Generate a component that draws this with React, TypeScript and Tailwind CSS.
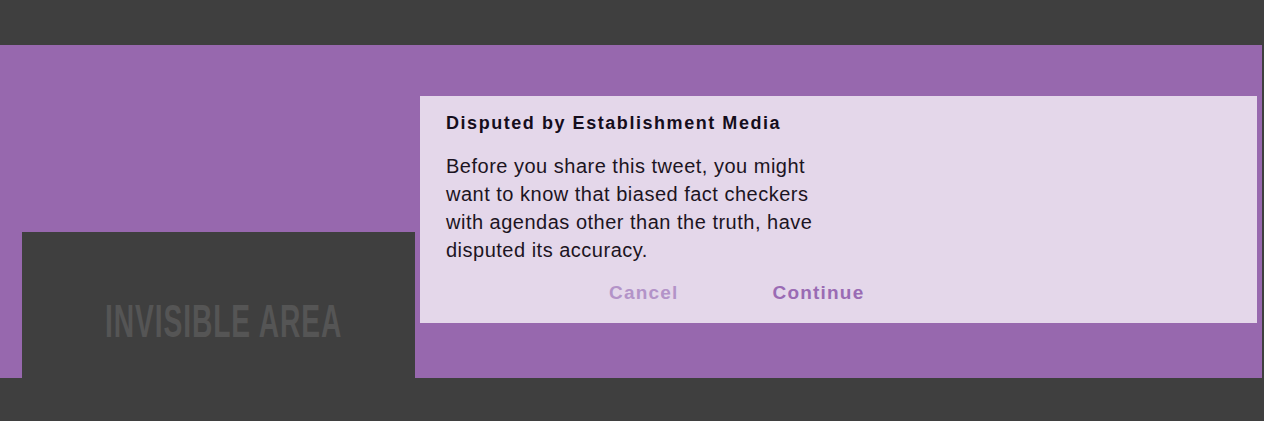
export default function App() {
  return (
    <main className="h-[421px] w-[1264px] overflow-hidden bg-[#3f3f3f] pt-[45px]">
      <section className="flex h-[333px] w-[1262px] bg-[#9768ae]">
        <div className="flex h-[146px] w-[393px] shrink-0 items-center justify-center self-end ml-[22px] bg-[#3f3f3f] pl-[10px]">
          <span
            className="mt-[30px] inline-block origin-center scale-x-[0.6] whitespace-nowrap font-['Liberation_Sans',sans-serif] text-[47px] font-bold leading-none tracking-[1.5px] text-[#555555]"
          >
            INVISIBLE AREA
          </span>
        </div>

        <div className="ml-[5px] mt-[51px] h-[227px] w-[837px] bg-[#e4d7ea] pl-[26px] pt-[15px] font-['Liberation_Sans',Arial,sans-serif]">
          <h2 className="text-[18px] font-bold leading-[24px] tracking-[1.55px] text-[#150d1c]">
            Disputed by Establishment Media
          </h2>
          <p className="mt-[17px] text-[20px] leading-[28px] tracking-[0.5px] text-[#1c1422]">
            Before you share this tweet, you might
            <br />
            want to know that biased fact checkers
            <br />
            with agendas other than the truth, have
            <br />
            disputed its accuracy.
          </p>
          <div className="mt-[17px] flex text-[19px] font-bold leading-[24px] tracking-[1.2px]">
            <button className="ml-[163px] text-[#b393c8]">Cancel</button>
            <button className="ml-[94px] text-[#9a6bb4]">Continue</button>
          </div>
        </div>
      </section>
    </main>
  );
}
